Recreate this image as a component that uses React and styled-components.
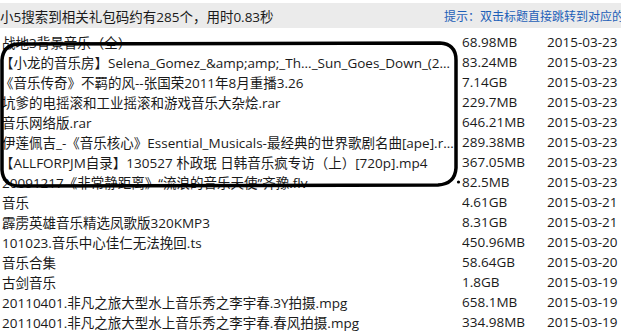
import React from "react";
import styled, { createGlobalStyle } from "styled-components";

const Global = createGlobalStyle`
  html, body { margin: 0; padding: 0; background: #fff; }
  body {
    font-family: "Open Sans", "Noto Sans CJK SC", sans-serif;
    text-spacing-trim: space-all;
  }
`;

const Page = styled.div`
  position: relative;
  width: 621px;
  height: 336px;
  overflow: hidden;
  background: #fff;
  padding-top: 3px;
  box-sizing: border-box;
`;

const Header = styled.div`
  display: flex;
  align-items: center;
  height: 25px;
  background: #ebebeb;
  white-space: nowrap;
  overflow: hidden;
`;

const Summary = styled.div`
  flex: 0 0 444px;
  font-size: 13.5px;
  color: #1a1a1a;
`;

const Hint = styled.div`
  flex: 1 1 auto;
  font-size: 12px;
  color: #1d5fb8;
  overflow: hidden;
`;

const List = styled.div`
  margin-top: 4px;
  display: flex;
  flex-direction: column;
`;

const Row = styled.div`
  display: grid;
  grid-template-columns: 455px 7px 85px 1fr;
  height: 20px;
  align-items: center;
  font-size: 13.5px;
  color: #1a1a1a;
  white-space: nowrap;
`;

const Name = styled.div`
  overflow: hidden;
  padding-left: ${(p) => (p.$bracket ? "0" : "2px")};
  font-variant-east-asian: full-width;
`;

const Cell = styled.div`
  overflow: hidden;
`;

const Annotation = styled.svg`
  position: absolute;
  left: 0;
  top: 0;
  pointer-events: none;
`;

const rows = [
  ["战地3背景音乐（全）", "68.98MB", "2015-03-23"],
  ["【小龙的音乐房】Selena_Gomez_&amp;amp;_Th..._Sun_Goes_Down_(2…", "83.24MB", "2015-03-23", true],
  ["《音乐传奇》不羁的风--张国荣2011年8月重播3.26", "7.14GB", "2015-03-23", true],
  ["坑爹的电摇滚和工业摇滚和游戏音乐大杂烩.rar", "229.7MB", "2015-03-23"],
  ["音乐网络版.rar", "646.21MB", "2015-03-23"],
  ["伊莲佩吉_-《音乐核心》Essential_Musicals-最经典的世界歌剧名曲[ape].r…", "289.38MB", "2015-03-23"],
  ["【ALLFORPJM自录】130527 朴政珉 日韩音乐疯专访（上）[720p].mp4", "367.05MB", "2015-03-23", true],
  ["20091217《非常静距离》“流浪的音乐天使”齐豫.flv", "82.5MB", "2015-03-23"],
  ["音乐", "4.61GB", "2015-03-21"],
  ["霹雳英雄音乐精选凤歌版320KMP3", "8.31GB", "2015-03-21"],
  ["101023.音乐中心佳仁无法挽回.ts", "450.96MB", "2015-03-20"],
  ["音乐合集", "58.64GB", "2015-03-20"],
  ["古剑音乐", "1.8GB", "2015-03-19"],
  ["20110401.非凡之旅大型水上音乐秀之李宇春.3Y拍摄.mpg", "658.1MB", "2015-03-19"],
  ["20110401.非凡之旅大型水上音乐秀之李宇春.春风拍摄.mpg", "334.98MB", "2015-03-19"],
];

export default function App() {
  return (
    <Page lang="zh-CN">
      <Global />
      <Header>
        <Summary>小5搜索到相关礼包码约有285个，用时0.83秒</Summary>
        <Hint>提示：双击标题直接跳转到对应的礼包码页面</Hint>
      </Header>
      <List>
        {rows.map(([n, s, d, b], i) => (
          <Row key={i}>
            <Name $bracket={b}>{n}</Name>
            <span />
            <Cell>{s}</Cell>
            <Cell>{d}</Cell>
          </Row>
        ))}
      </List>
      <Annotation width="621" height="336" viewBox="0 0 621 336">
        <path
          d="M18 44 L440 43 Q456 44 456 60 L456 168 Q455 184 438 185 L18 186 Q3 185 2 170 L2 60 Q3 45 18 44 Z"
          fill="none"
          stroke="#000"
          strokeWidth="3.5"
          strokeLinejoin="round"
        />
        <circle cx="458.5" cy="182" r="1.6" fill="#000" />
      </Annotation>
    </Page>
  );
}
